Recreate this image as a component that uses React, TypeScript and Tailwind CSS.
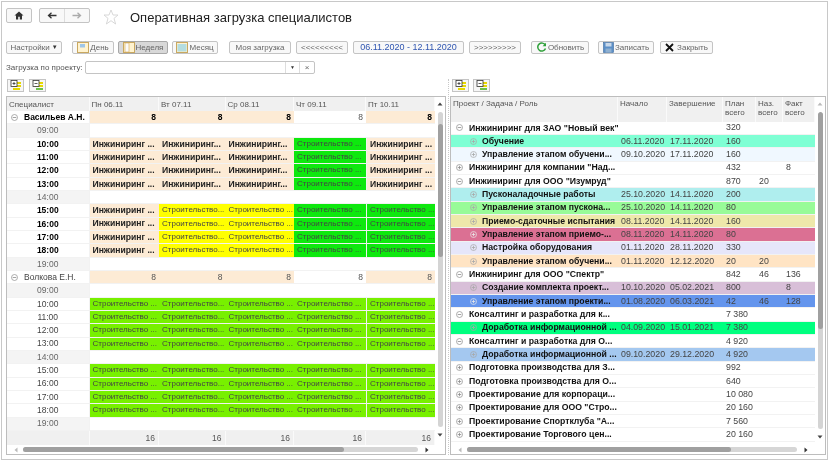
import React from "react";

const F = "[font-family:'Liberation_Sans',Arial,sans-serif]";

function Expander({ open, dark, light }: { open: boolean; dark?: boolean; light?: boolean }) {
  const c = dark ? "#e8e8e8" : light ? "#a8a8a8" : "#8c8c8c";
  return (
    <svg width="7" height="7" viewBox="0 0 7 7" className="shrink-0">
      <circle cx="3.5" cy="3.5" r="3" fill="none" stroke={c} strokeWidth="0.7" />
      <path d="M1.7 3.5H5.3" stroke={c} strokeWidth="0.8" />
      {!open && <path d="M3.5 1.7V5.3" stroke={c} strokeWidth="0.8" />}
    </svg>
  );
}

function Btn({ w, ml = 0, active, children }: { w: string; ml?: number; active?: boolean; children: React.ReactNode }) {
  return (
    <div
      className={`${w} h-[13px] flex items-center justify-center gap-[1px] border rounded-[2px] text-[8px] text-[#666] shrink-0 ${
        active ? "bg-[#d8d8d8] border-[#a8a8a8]" : "bg-[#f8f8f8] border-[#c4c4c4]"
      }`}
      style={ml ? { marginLeft: ml } : undefined}
    >
      {children}
    </div>
  );
}

function CalIcon({ kind }: { kind: "d" | "w" | "m" }) {
  return (
    <svg width="12" height="11" viewBox="0 0 12 11">
      <rect x="0.5" y="0.5" width="11" height="10" fill="#fff3cf" stroke="#c9a860" />
      {kind === "d" && <rect x="3" y="2" width="5" height="3.5" fill="#9fc6e8" />}
      {kind === "w" && <rect x="2" y="1" width="4" height="9" fill="#fafafa" stroke="#d8a850" strokeWidth="0.6" />}
      {kind === "m" && <rect x="1.5" y="2" width="9" height="7.5" fill="#b4dde0" />}
    </svg>
  );
}

function TreeBtn({ minus }: { minus?: boolean }) {
  return (
    <div className="w-[17px] h-[13px] bg-[#f6f6f6] border border-[#c4c4c4] flex items-center justify-center shrink-0">
      <svg width="12" height="11" viewBox="0 0 12 11">
        <rect x="3" y="2" width="8" height="2" fill="#e6d800" />
        <rect x="3" y="5" width="8" height="2" fill="#e6d800" />
        <rect x={minus ? 4 : 3} y="8" width="7" height="2" fill={minus ? "#6cc04a" : "#e6d800"} />
        <rect x="1" y="0.5" width="6" height="6" fill="#fff" stroke="#333" strokeWidth="0.8" />
        <path d="M2.5 3.5H5.5" stroke="#333" strokeWidth="0.8" />
        {!minus && <path d="M4 2V5" stroke="#333" strokeWidth="0.8" />}
      </svg>
    </div>
  );
}

function VScroll({ dark, track, upLight }: { dark: [number, number]; track: number; upLight?: boolean }) {
  return (
    <div className="w-[10px] shrink-0 bg-white flex flex-col items-center">
      <svg width="6" height="4" viewBox="0 0 6 4" className="mt-[5px] mb-[6px]">
        <path d="M0.5 3.5H5.5L3 0.5Z" fill={upLight ? "#bbb" : "#444"} />
      </svg>
      <div className="w-[5px] rounded-[3px] bg-[#d4d4d4] overflow-hidden" style={{ height: track }}>
        <div className="w-full bg-[#a0a0a0] rounded-[3px]" style={{ marginTop: dark[0], height: dark[1] }} />
      </div>
      <svg width="6" height="4" viewBox="0 0 6 4" className="mt-[6px]">
        <path d="M0.5 0.5H5.5L3 3.5Z" fill="#444" />
      </svg>
    </div>
  );
}

function HScroll({ thumb, track, ml }: { thumb: number; track: number; ml: number }) {
  return (
    <div className="h-[9px] shrink-0 flex items-center bg-white">
      <svg width="4" height="6" viewBox="0 0 4 6" className="shrink-0" style={{ marginLeft: ml }}>
        <path d="M3.5 0.5V5.5L0.5 3Z" fill="#bbb" />
      </svg>
      <div className="h-[5px] rounded-[3px] bg-[#d6d6d6] ml-[5px]" style={{ width: track }}>
        <div className="h-full rounded-[3px] bg-[#a0a0a0]" style={{ width: thumb }} />
      </div>
      <svg width="4" height="6" viewBox="0 0 4 6" className="shrink-0 ml-[7px]">
        <path d="M0.5 0.5V5.5L3.5 3Z" fill="#333" />
      </svg>
    </div>
  );
}

const BASE = "h-[13.33px] flex items-center px-[3px] border-b border-[#f2f2f2] whitespace-nowrap overflow-hidden leading-none";
const I1 = "Инжиниринг ...";
const I2 = "Инжиниринг...";
const S1 = "Строительство ...";
const S2 = "Строительство...";

type Cell = { t: string; bg: string; b?: boolean };
const peach = "bg-[#fdebd5]";
const yellow = "bg-[#ffff00]";
const green = "bg-[#0ee80e]";
const lime = "bg-[#78f000]";
const P = (t: string): Cell => ({ t, bg: peach, b: true });
const Y = (t: string): Cell => ({ t, bg: yellow });
const G = (t: string): Cell => ({ t, bg: green });
const L = (t: string): Cell => ({ t, bg: lime });

const vFull: Cell[] = [P(I1), P(I2), P(I2), G(S1), P(I1)];
const vHalf: Cell[] = [P(I1), Y(S2), Y(S1), G(S1), G(S1)];
const vol: Cell[] = [L(S1), L(S2), L(S1), L(S1), L(S1)];

type Row = { time: string; cells?: Cell[] };
const makeRows = (a: Cell[], b: Cell[]): Row[] => [
  { time: "09:00" },
  { time: "10:00", cells: a },
  { time: "11:00", cells: a },
  { time: "12:00", cells: a },
  { time: "13:00", cells: a },
  { time: "14:00" },
  { time: "15:00", cells: b },
  { time: "16:00", cells: b },
  { time: "17:00", cells: b },
  { time: "18:00", cells: b },
  { time: "19:00" },
];

function PersonBlock({ name, bold, rows }: { name: string; bold?: boolean; rows: Row[] }) {
  const totals = [true, true, true, false, true];
  return (
    <>
      <div className={`${BASE} text-[8.5px] bg-white gap-[6px] !pl-[4px] border-r border-[#d8d8d8] ${bold ? "font-bold text-black" : "text-[#444]"}`}>
        <Expander open />
        <span>{name}</span>
      </div>
      {totals.map((p, i) => (
        <div key={i} className={`${BASE} text-[8.5px] justify-end ${p ? peach : "bg-white"} ${bold && p ? "font-bold text-black" : "text-[#555]"}`}>
          8
        </div>
      ))}
      {rows.map((r) => {
        const off = !r.cells;
        return (
          <React.Fragment key={r.time}>
            <div
              className={`${BASE} text-[8.5px] justify-center border-r border-[#d8d8d8] ${off ? "bg-[#f4f4f4] text-[#666]" : "bg-white"} ${
                !off && bold ? "font-bold text-black" : !off ? "text-[#444]" : ""
              }`}
            >
              {r.time}
            </div>
            {off
              ? [0, 1, 2, 3, 4].map((i) => <div key={i} className={`${BASE} bg-white`} />)
              : r.cells!.map((c, i) => (
                  <div key={i} className={`${BASE} ${c.bg} ${c.b ? "font-bold text-[#222] text-[8.6px]" : "text-[#444] text-[8px]"} ${i === 4 ? "border-l border-[#e6f6e0]" : ""}`}>
                    {c.t}
                  </div>
                ))}
          </React.Fragment>
        );
      })}
    </>
  );
}

type PRow = { n: string; lvl: 0 | 1; open?: boolean; bg?: string; s?: string; e?: string; p?: string; a?: string; f?: string; dark?: boolean };
const pRows: PRow[] = [
  { n: 'Инжиниринг для ЗАО "Новый век"', lvl: 0, open: true, p: "320" },
  { n: "Обучение", lvl: 1, bg: "bg-[#7fffd4]", s: "06.11.2020", e: "17.11.2020", p: "160" },
  { n: "Управление этапом обучени...", lvl: 1, bg: "bg-[#f0f8ff]", s: "09.10.2020", e: "17.11.2020", p: "160" },
  { n: 'Инжиниринг для компании "Над...', lvl: 0, open: false, p: "432", f: "8" },
  { n: 'Инжиниринг для ООО "Изумруд"', lvl: 0, open: true, p: "870", a: "20" },
  { n: "Пусконаладочные работы", lvl: 1, bg: "bg-[#afeeee]", s: "25.10.2020", e: "14.11.2020", p: "200" },
  { n: "Управление этапом пускона...", lvl: 1, bg: "bg-[#98fb98]", s: "25.10.2020", e: "14.11.2020", p: "80" },
  { n: "Приемо-сдаточные испытания", lvl: 1, bg: "bg-[#eee8aa]", s: "08.11.2020", e: "14.11.2020", p: "160" },
  { n: "Управление этапом приемо-...", lvl: 1, bg: "bg-[#db7093]", s: "08.11.2020", e: "14.11.2020", p: "80", dark: true },
  { n: "Настройка оборудования", lvl: 1, bg: "bg-[#e6e6fa]", s: "01.11.2020", e: "28.11.2020", p: "330" },
  { n: "Управление этапом обучени...", lvl: 1, bg: "bg-[#ffe4c4]", s: "01.11.2020", e: "12.12.2020", p: "20", a: "20" },
  { n: 'Инжиниринг для ООО "Спектр"', lvl: 0, open: true, p: "842", a: "46", f: "136" },
  { n: "Создание комплекта проект...", lvl: 1, bg: "bg-[#d8bfd8]", s: "10.10.2020", e: "05.02.2021", p: "800", f: "8" },
  { n: "Управление этапом проекти...", lvl: 1, bg: "bg-[#6495ed]", s: "01.08.2020", e: "06.03.2021", p: "42", a: "46", f: "128", dark: true },
  { n: "Консалтинг и разработка для к...", lvl: 0, open: true, p: "7 380" },
  { n: "Доработка информационной ...", lvl: 1, bg: "bg-[#00ff7f]", s: "04.09.2020", e: "15.01.2021", p: "7 380" },
  { n: "Консалтинг и разработка для О...", lvl: 0, open: true, p: "4 920" },
  { n: "Доработка информационной ...", lvl: 1, bg: "bg-[#a4c8f0]", s: "09.10.2020", e: "29.12.2020", p: "4 920" },
  { n: "Подготовка производства для З...", lvl: 0, open: false, p: "992" },
  { n: "Подготовка производства для О...", lvl: 0, open: false, p: "640" },
  { n: "Проектирование для корпораци...", lvl: 0, open: false, p: "10 080" },
  { n: 'Проектирование для ООО "Стро...', lvl: 0, open: false, p: "20 160" },
  { n: 'Проектирование Спортклуба "А...', lvl: 0, open: false, p: "7 560" },
  { n: "Проектирование Торгового цен...", lvl: 0, open: false, p: "20 160" },
];

const HEAD = "bg-[#f0f0f0] border-r border-[#fafafa] text-[8px] text-[#555] px-[2px] pt-[2px] leading-[9px]";

export default function App() {
  const c1 = "grid grid-cols-[82.5px_69.5px_66.5px_68.5px_72px_69px]";
  const c2 = "grid grid-cols-[167px_49px_56px_33px_27px_32px]";
  return (
    <div className={`w-[830px] h-[461px] bg-white pl-[1px] pt-[1px] blur-[0.45px] ${F}`}>
      <div className="w-[827px] h-[459px] border border-[#c8c8c8] pl-[4px] flex flex-col">
        {/* nav */}
        <div className="h-[15px] mt-[6px] flex items-center shrink-0">
          <div className="w-[26px] h-[15px] bg-[#f8f8f8] border border-[#c4c4c4] rounded-[2px] flex items-center justify-center">
            <svg width="10" height="9" viewBox="0 0 10 9">
              <path d="M5 0.5L9.5 4.6H8V8.5H5.8V5.8H4.2V8.5H2V4.6H0.5Z" fill="#333" />
            </svg>
          </div>
          <div className="w-[51px] h-[15px] ml-[7px] bg-[#f8f8f8] border border-[#c4c4c4] rounded-[2px] flex">
            <div className="flex-1 flex items-center justify-center border-r border-[#ddd]">
              <svg width="10" height="7" viewBox="0 0 10 7">
                <path d="M9.5 3.5H2M4.5 0.8L1.5 3.5L4.5 6.2" fill="none" stroke="#333" strokeWidth="1.3" />
              </svg>
            </div>
            <div className="flex-1 flex items-center justify-center">
              <svg width="10" height="7" viewBox="0 0 10 7">
                <path d="M0.5 3.5H8M5.5 0.8L8.5 3.5L5.5 6.2" fill="none" stroke="#aaa" strokeWidth="1.3" />
              </svg>
            </div>
          </div>
          <svg width="16" height="16" viewBox="0 0 16 16" className="ml-[13px] mt-[2px]">
            <path d="M8 1L10 6H15L11 9.4L12.6 15L8 11.7L3.4 15L5 9.4L1 6H6Z" fill="#fff" stroke="#d4d4d4" strokeWidth="0.9" />
          </svg>
          <div className="ml-[11px] mt-[4px] text-[13px] leading-none text-[#222] whitespace-nowrap">Оперативная загрузка специалистов</div>
        </div>

        {/* command bar */}
        <div className="h-[13px] mt-[18px] flex items-center shrink-0">
          <Btn w="w-[56px]">
            <span>Настройки</span>
            <span className="text-[6px] text-[#333] ml-[1px]">▼</span>
          </Btn>
          <Btn w="w-[42px]" ml={10}>
            <CalIcon kind="d" />
            <span>День</span>
          </Btn>
          <Btn w="w-[50px]" ml={4} active>
            <CalIcon kind="w" />
            <span>Неделя</span>
          </Btn>
          <Btn w="w-[46px]" ml={4}>
            <CalIcon kind="m" />
            <span>Месяц</span>
          </Btn>
          <Btn w="w-[62px]" ml={11}>Моя загрузка</Btn>
          <Btn w="w-[52px]" ml={5}>&lt;&lt;&lt;&lt;&lt;&lt;&lt;&lt;&lt;</Btn>
          <Btn w="w-[111px]" ml={5}>
            <span className="text-[#2f55b0] text-[9px] [font-weight:500]">06.11.2020 - 12.11.2020</span>
          </Btn>
          <Btn w="w-[52px]" ml={5}>&gt;&gt;&gt;&gt;&gt;&gt;&gt;&gt;&gt;</Btn>
          <Btn w="w-[58px]" ml={10}>
            <svg width="11" height="11" viewBox="0 0 11 11">
              <path d="M9.3 3.2A4 4 0 1 0 9.5 6.5" fill="none" stroke="#2fa03a" strokeWidth="1.5" />
              <path d="M10 0.8V4.2H6.6Z" fill="#2fa03a" />
            </svg>
            <span>Обновить</span>
          </Btn>
          <Btn w="w-[56px]" ml={9}>
            <svg width="11" height="11" viewBox="0 0 11 11">
              <rect x="0.5" y="0.5" width="10" height="10" fill="#5b8fc7" stroke="#3f6a9c" strokeWidth="0.6" />
              <rect x="2.5" y="1" width="6" height="3.5" fill="#c8d8ea" />
              <rect x="2.5" y="6.5" width="6" height="4" fill="#8fb0d0" />
            </svg>
            <span>Записать</span>
          </Btn>
          <Btn w="w-[53px]" ml={6}>
            <svg width="9" height="9" viewBox="0 0 9 9">
              <path d="M1 1L8 8M8 1L1 8" stroke="#111" strokeWidth="1.8" />
            </svg>
            <span className="ml-[2px]">Закрыть</span>
          </Btn>
        </div>

        {/* filter */}
        <div className="h-[13px] mt-[7px] flex items-center shrink-0">
          <div className="w-[79px] text-[8px] text-[#555] whitespace-nowrap">Загрузка по проекту:</div>
          <div className="w-[230px] h-[13px] bg-white border border-[#c4c4c4] rounded-[2px] flex justify-end">
            <div className="w-[14px] border-l border-[#ddd] flex items-center justify-center text-[5px] text-[#333]">▼</div>
            <div className="w-[15px] border-l border-[#ddd] flex items-center justify-center text-[8px] text-[#666]">×</div>
          </div>
        </div>

        {/* panels */}
        <div className="flex mt-[5px] flex-1 min-h-0">
          {/* left */}
          <div className="w-[440px] shrink-0 flex flex-col">
            <div className="h-[13px] flex gap-[5px] shrink-0 pl-[1px]">
              <TreeBtn />
              <TreeBtn minus />
            </div>
            <div className="mt-[4px] h-[359px] border border-[#bdbdbd] flex flex-col">
              <div className="flex flex-1 min-h-0">
                <div className="flex-1 min-w-0 flex flex-col">
                  <div className={`${c1} h-[14px]`}>
                    {["Специалист", "Пн 06.11", "Вт 07.11", "Ср 08.11", "Чт 09.11", "Пт 10.11"].map((h) => (
                      <div key={h} className={`${HEAD} flex items-center !pt-0`}>{h}</div>
                    ))}
                  </div>
                  <div className={c1}>
                    <PersonBlock name="Васильев А.Н." bold rows={makeRows(vFull, vHalf)} />
                    <PersonBlock name="Волкова Е.Н." rows={makeRows(vol, vol)} />
                  </div>
                  <div className={`${c1} h-[14px] bg-[#f0f0f0]`}>
                    <div className="border-r border-[#fafafa]" />
                    {[0, 1, 2, 3, 4].map((i) => (
                      <div key={i} className="border-r border-[#fafafa] flex items-center justify-end pr-[3px] text-[8.5px] text-[#555]">16</div>
                    ))}
                  </div>
                </div>
                <VScroll dark={[12, 133]} track={315} />
              </div>
              <HScroll thumb={321} track={395} ml={7} />
            </div>
          </div>

          {/* splitter */}
          <div className="w-[4px] shrink-0 flex justify-center">
            <div className="h-[376px] border-l border-dotted border-[#c8c8c8]" />
          </div>

          {/* right */}
          <div className="w-[376px] shrink-0 flex flex-col">
            <div className="h-[13px] flex gap-[4px] shrink-0 pl-[2px]">
              <TreeBtn />
              <TreeBtn minus />
            </div>
            <div className="mt-[4px] h-[359px] border border-[#bdbdbd] flex flex-col">
              <div className="flex flex-1 min-h-0">
                <div className="flex-1 min-w-0 flex flex-col">
                  <div className={`${c2} h-[24.7px]`}>
                    {["Проект / Задача / Роль", "Начало", "Завершение"].map((h) => (
                      <div key={h} className={HEAD}>{h}</div>
                    ))}
                    <div className={HEAD}>План<br />всего</div>
                    <div className={HEAD}>Наз.<br />всего</div>
                    <div className={HEAD}>Факт<br />всего</div>
                  </div>
                  <div className={c2}>
                    {pRows.map((r, i) => {
                      const bg = r.bg ?? "bg-white";
                      const tc = "text-[#444] text-[8.8px] !px-[3px]";
                      return (
                        <React.Fragment key={i}>
                          <div
                            className={`${BASE} ${bg} font-bold text-[#111] text-[8.7px] ${
                              r.lvl === 0 ? "!pl-[5px] gap-[6px]" : "!pl-[19px] gap-[5px]"
                            }`}
                          >
                            <Expander open={!!r.open} dark={r.dark} light={r.lvl === 1} />
                            <span>{r.n}</span>
                          </div>
                          <div className={`${BASE} ${bg} ${tc}`}>{r.s}</div>
                          <div className={`${BASE} ${bg} ${tc}`}>{r.e}</div>
                          <div className={`${BASE} ${bg} ${tc}`}>{r.p}</div>
                          <div className={`${BASE} ${bg} ${tc}`}>{r.a}</div>
                          <div className={`${BASE} ${bg} ${tc}`}>{r.f}</div>
                        </React.Fragment>
                      );
                    })}
                  </div>
                </div>
                <VScroll dark={[0, 217]} track={317} upLight />
              </div>
              <div className="h-[12.3px] flex items-end">
                <div className="flex-1">
                  <HScroll thumb={264} track={330} ml={7} />
                </div>
              </div>
            </div>
          </div>
        </div>
      </div>
    </div>
  );
}
